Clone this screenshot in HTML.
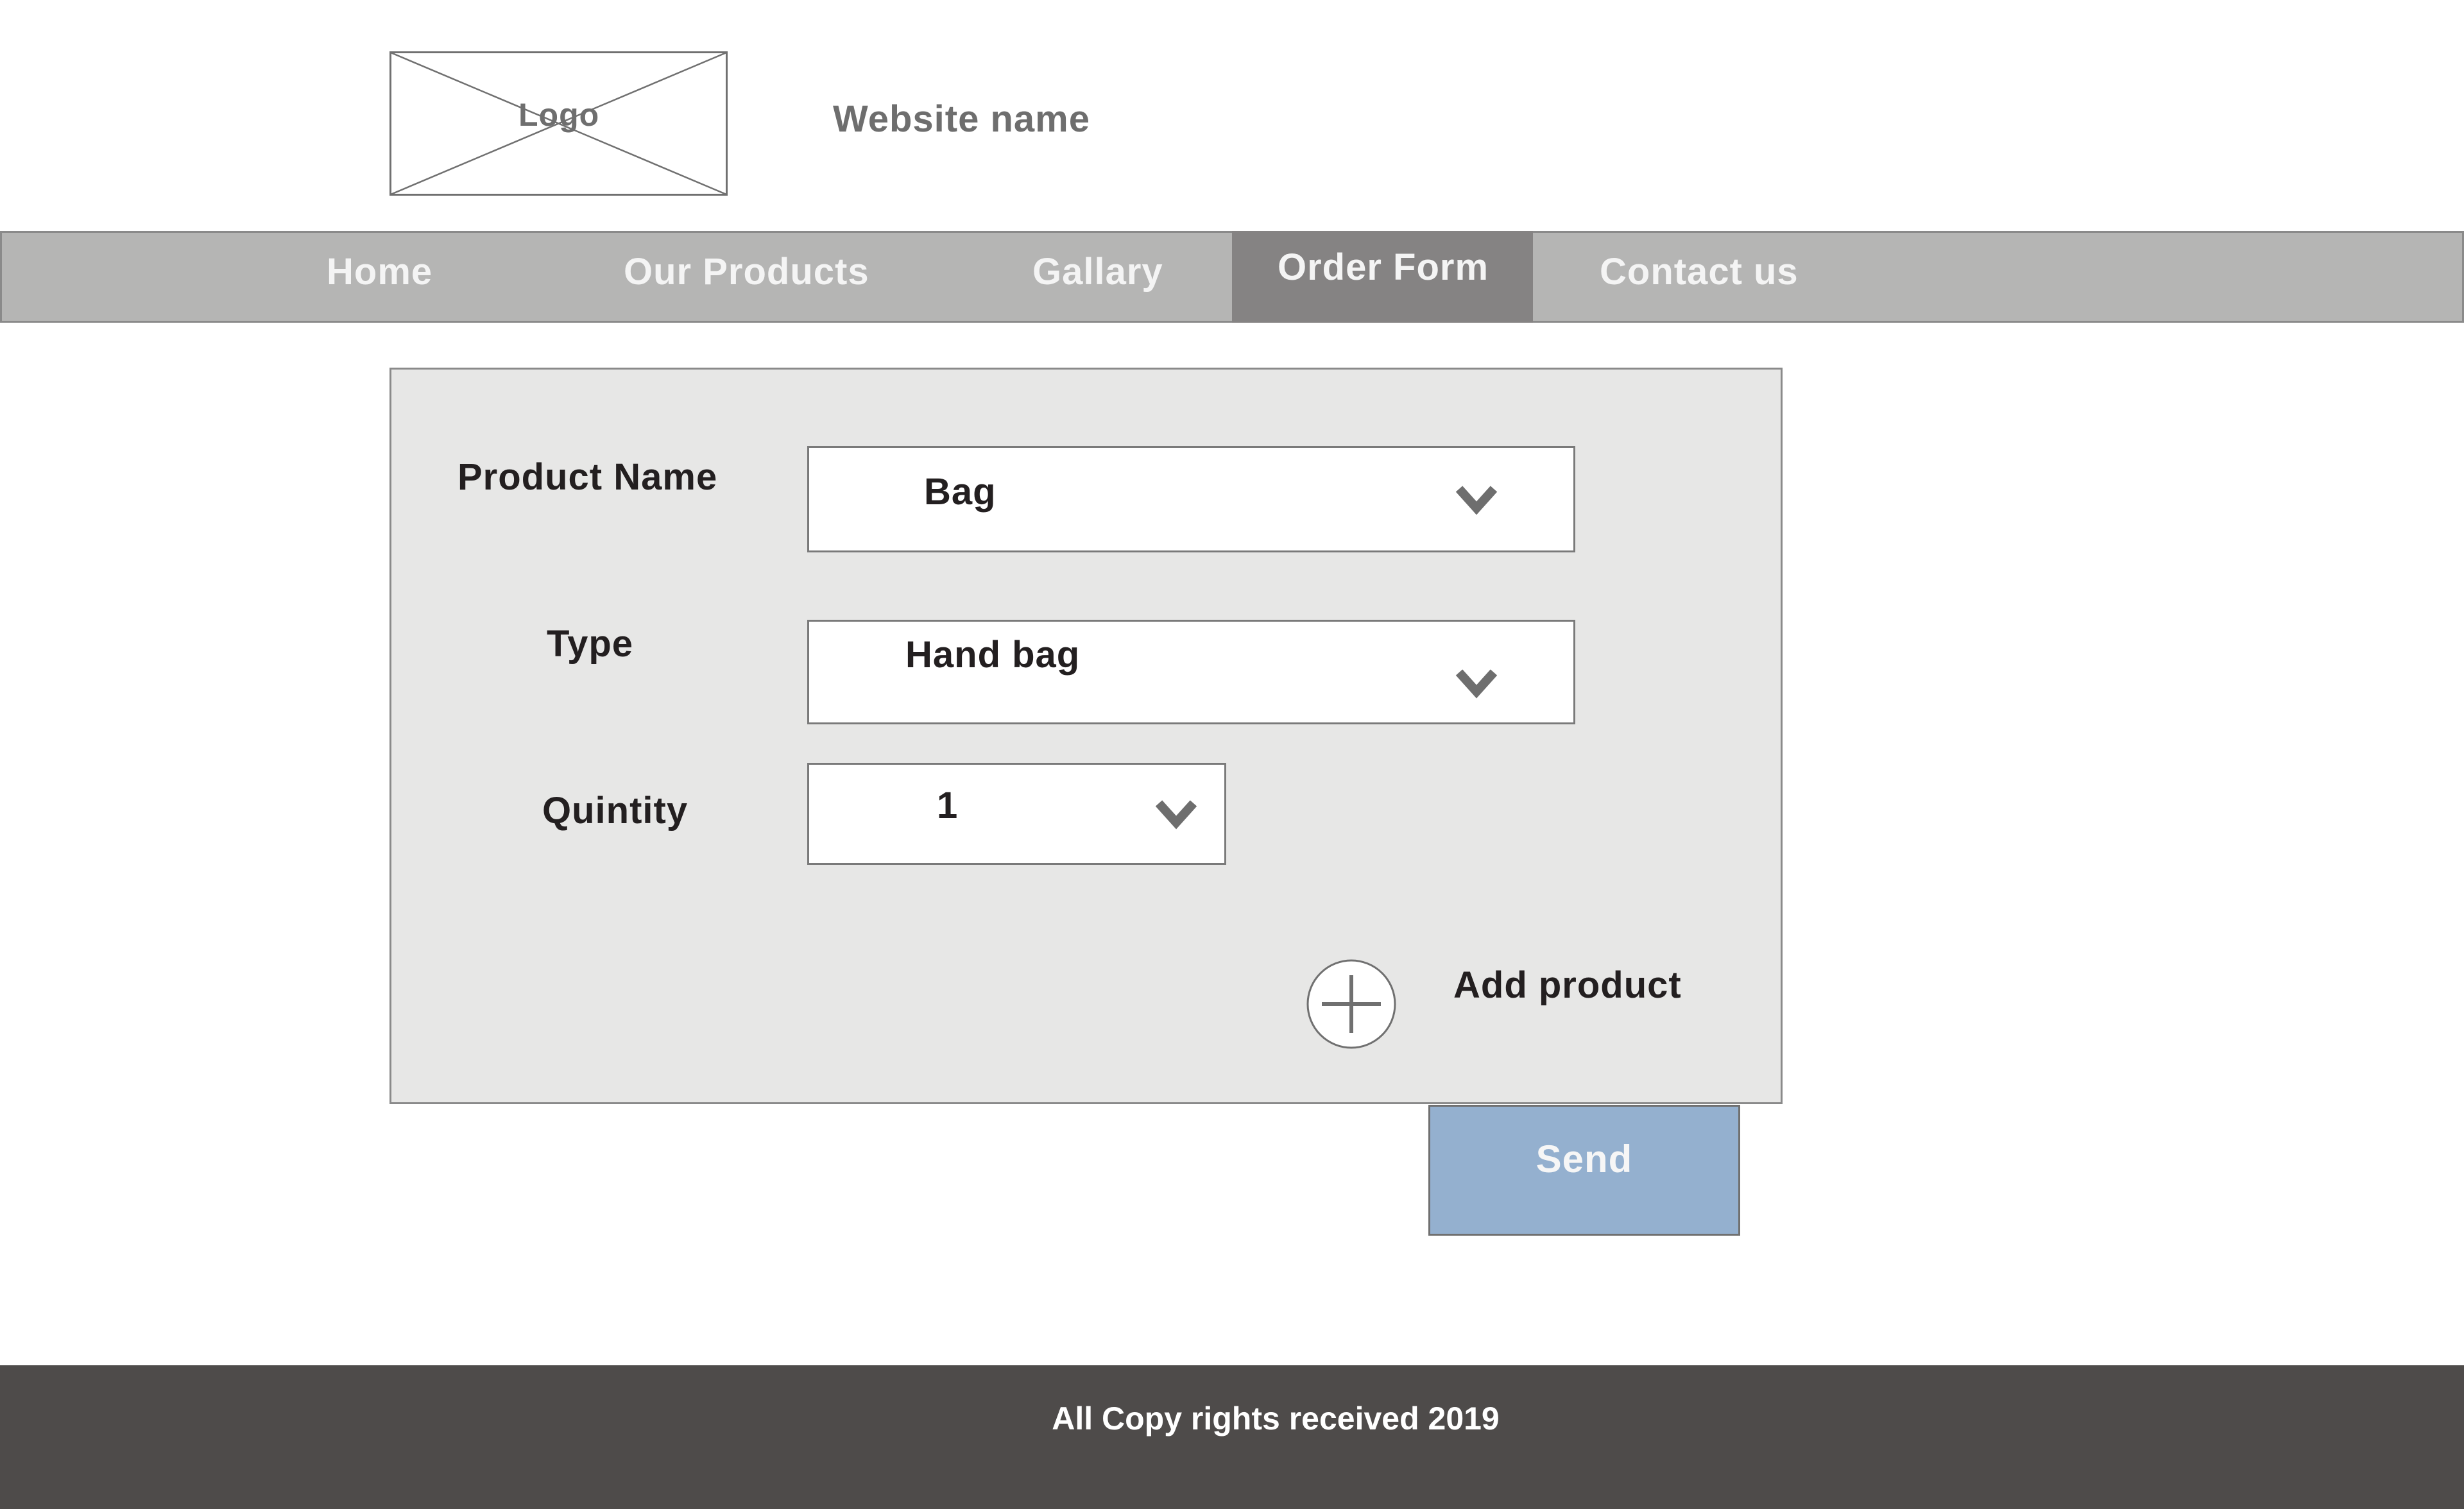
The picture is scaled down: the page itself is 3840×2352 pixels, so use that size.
<!DOCTYPE html>
<html><head><meta charset="utf-8"><style>
*{margin:0;padding:0;box-sizing:border-box}
body{width:3840px;height:2352px;position:relative;background:#fff;font-family:"Liberation Sans",Arial,sans-serif;font-weight:bold;overflow:hidden;letter-spacing:1px}
.a{position:absolute;white-space:nowrap}
.nav{color:#f4f4f4;font-size:58px;top:390px}
.lbl{color:#231f20;font-size:58px}
.sel{position:absolute;background:#fff;border:3px solid #7a7a7a}
.val{color:#231f20;font-size:58px}
</style></head><body>
<svg class="a" style="left:607px;top:80px" width="527" height="225"><rect x="1.5" y="1.5" width="524" height="222" fill="#fff" stroke="#707070" stroke-width="3"/><line x1="2" y1="2" x2="525" y2="223" stroke="#707070" stroke-width="2.5"/><line x1="525" y1="2" x2="2" y2="223" stroke="#707070" stroke-width="2.5"/></svg>
<div class="a" style="left:808px;top:150px;font-size:50px;color:#6e6e6e">Logo</div>
<div class="a" style="left:1298px;top:152px;font-size:58px;color:#6e6e6e">Website name</div>

<div class="a" style="left:0;top:360px;width:3840px;height:143px;background:#b5b5b4;border:3px solid #8a8a8a"></div>
<div class="a" style="left:1920px;top:360px;width:469px;height:143px;background:#858383"></div>
<div class="a nav" style="left:509px">Home</div>
<div class="a nav" style="left:972px">Our Products</div>
<div class="a nav" style="left:1609px">Gallary</div>
<div class="a nav" style="left:1991px;top:383px">Order Form</div>
<div class="a nav" style="left:2493px">Contact us</div>

<div class="a" style="left:607px;top:573px;width:2171px;height:1148px;background:#e7e7e6;border:3px solid #8a8a8a"></div>
<div class="a lbl" style="left:713px;top:710px">Product Name</div>
<div class="a lbl" style="left:852px;top:970px">Type</div>
<div class="a lbl" style="left:845px;top:1230px">Quintity</div>

<div class="sel" style="left:1258px;top:695px;width:1197px;height:166px"></div>
<div class="a val" style="left:1440px;top:733px">Bag</div>
<svg class="a" style="left:2268px;top:756px" width="66" height="48"><path d="M6 6 L33 36 L60 6" fill="none" stroke="#6e6e6e" stroke-width="14"/></svg>

<div class="sel" style="left:1258px;top:966px;width:1197px;height:163px"></div>
<div class="a val" style="left:1411px;top:987px">Hand bag</div>
<svg class="a" style="left:2268px;top:1042px" width="66" height="48"><path d="M6 6 L33 36 L60 6" fill="none" stroke="#6e6e6e" stroke-width="14"/></svg>

<div class="sel" style="left:1258px;top:1189px;width:653px;height:159px"></div>
<div class="a val" style="left:1460px;top:1222px">1</div>
<svg class="a" style="left:1800px;top:1246px" width="66" height="48"><path d="M6 6 L33 36 L60 6" fill="none" stroke="#6e6e6e" stroke-width="14"/></svg>

<svg class="a" style="left:2034px;top:1494px" width="144" height="142"><ellipse cx="72" cy="71" rx="68" ry="68" fill="#fff" stroke="#707070" stroke-width="3"/><line x1="72" y1="26" x2="72" y2="116" stroke="#707070" stroke-width="6"/><line x1="26" y1="71" x2="118" y2="71" stroke="#707070" stroke-width="6"/></svg>
<div class="a lbl" style="left:2265px;top:1502px">Add product</div>

<div class="a" style="left:2226px;top:1722px;width:486px;height:204px;background:#94b0cf;border:3px solid #707070"></div>
<div class="a" style="left:2226px;top:1772px;width:486px;text-align:center;font-size:60px;color:#f6f6f6">Send</div>

<div class="a" style="left:0;top:2128px;width:3840px;height:224px;background:#4e4b4a"></div>
<div class="a" style="left:0;top:2182px;width:3976px;text-align:center;font-size:50px;color:#fff;letter-spacing:0">All Copy rights received 2019</div>
</body></html>
